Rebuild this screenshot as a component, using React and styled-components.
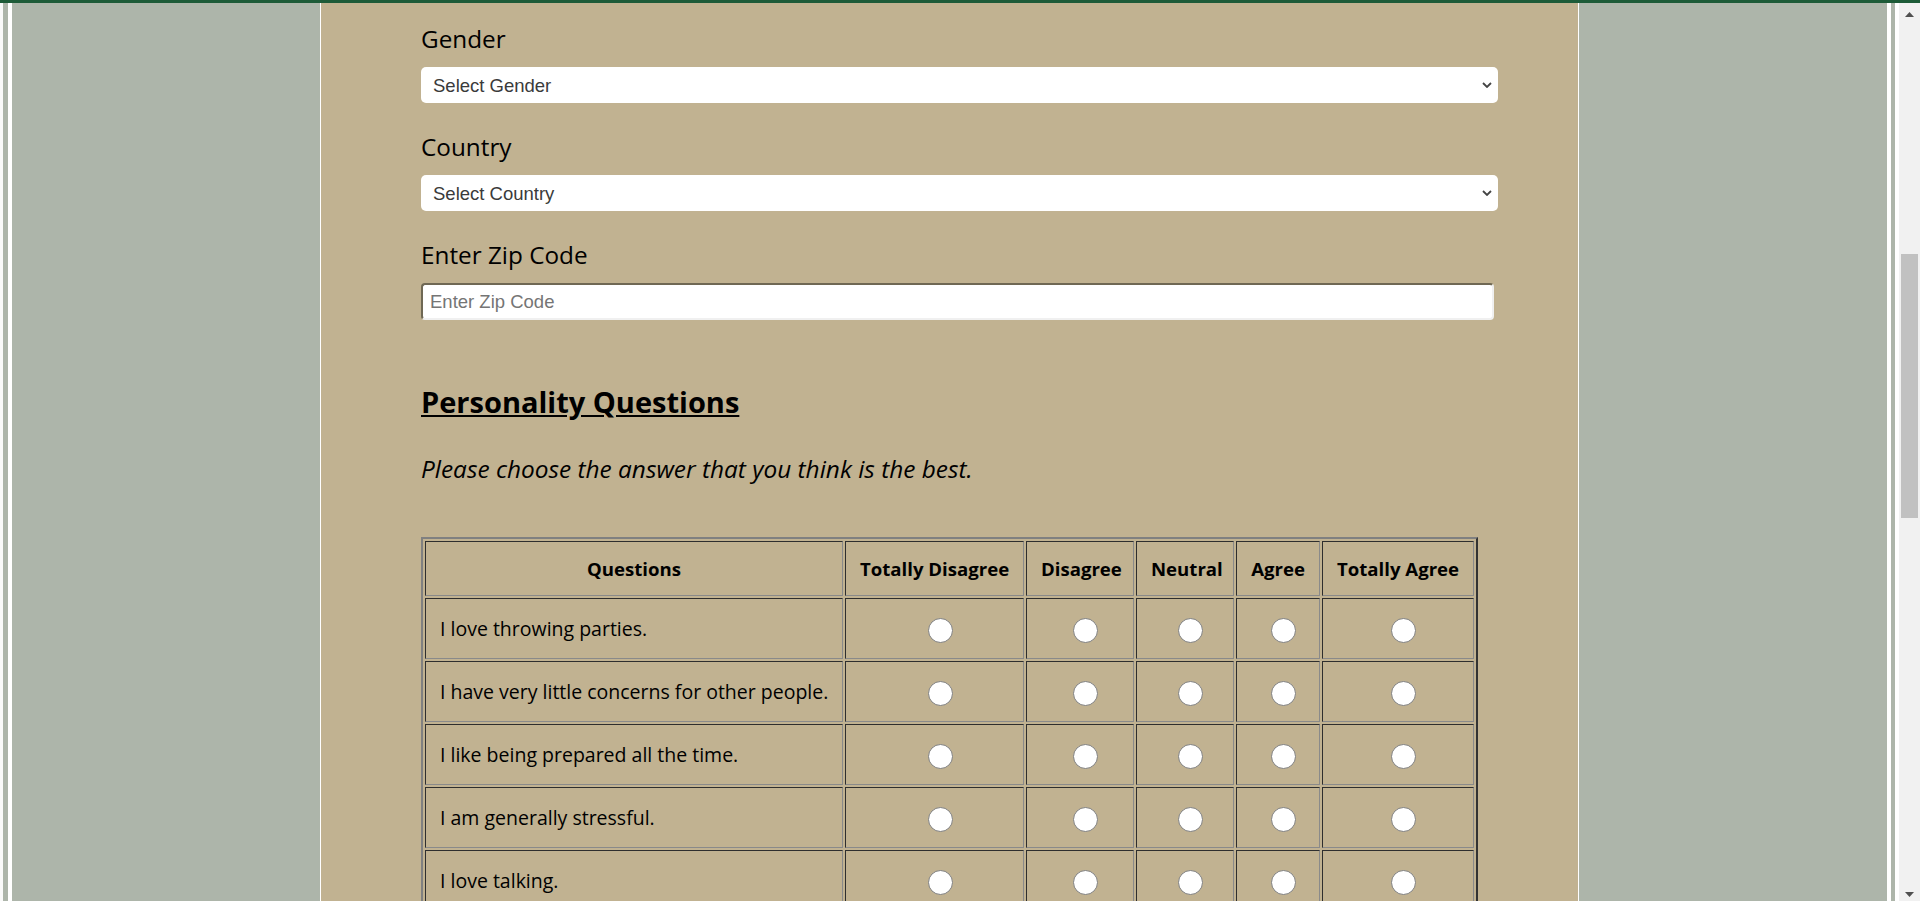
import React from 'react'
import styled, { createGlobalStyle } from 'styled-components'

const GlobalStyle = createGlobalStyle`
html, body {
    margin: 0;
    padding: 0;
    height: 100%;
    overflow: hidden;
}
body {
    font-family: 'Open Sans', 'Noto Sans', sans-serif;
    background: #adb5aa;
}
#root {
    height: 100%;
}
`

const Page = styled.div`
display: flex;
flex-direction: column;
height: 100vh;
`

const TopLine = styled.div`
height: 3px;
flex-shrink: 0;
background: #1d5b38;
`

const Body = styled.div`
flex: 1;
display: flex;
min-height: 0;
`

const Stripe = styled.div`
width: ${props => props.$w}px;
flex-shrink: 0;
background: ${props => props.$c};
`

const Backdrop = styled.div`
flex: 1;
display: flex;
justify-content: center;
overflow: hidden;
background: #adb5aa;
`

const Panel = styled.main`
width: 1259px;
flex-shrink: 0;
box-sizing: border-box;
background: #c1b291;
border-left: 1px solid #fff;
border-right: 1px solid #fff;
padding: 20px 80px 0 100px;
`

const Field = styled.div`
margin-bottom: 28px;
`

const Label = styled.label`
display: block;
font-size: 24.3px;
font-weight: 500;
line-height: 32px;
color: #000;
margin-bottom: 12px;
`

const SelectWrap = styled.div`
position: relative;
`

const Select = styled.select`
appearance: none;
display: block;
width: 100%;
height: 36px;
border: none;
border-radius: 5px;
background: #fff;
padding: 0 30px 0 12px;
font: 18.5px 'Liberation Sans', Arial, sans-serif;
color: #3a3a3a;
outline: none;
`

const Chevron = styled.svg`
position: absolute;
right: 6px;
top: 15px;
pointer-events: none;
`

const TextInput = styled.input`
display: block;
width: 1073px;
height: 37px;
box-sizing: border-box;
border-width: 2px;
border-style: solid;
border-color: #6f6854 #f0f0f0 #f0f0f0 #6f6854;
border-radius: 4px;
background: #fff;
padding: 0 7px;
font: 18.5px 'Liberation Sans', Arial, sans-serif;
color: #222;
outline: none;
::placeholder {
    color: #757575;
}
`

const Title = styled.h2`
margin: 62px 0 0;
font-size: 29px;
line-height: 40px;
font-weight: 700;
text-decoration: underline;
color: #000;
`

const Hint = styled.p`
margin: 30px 0 0;
font-size: 24.4px;
line-height: 34px;
font-style: italic;
color: #000;
`

const Table = styled.table`
margin-top: 51px;
width: 1057px;
table-layout: fixed;
border-collapse: separate;
border-spacing: 2px;
border-style: solid;
border-width: 2px;
border-color: #808080 #333 #333 #808080;
`

const HeadRow = styled.tr`
height: 55px;
`

const Row = styled.tr`
height: 61px;
`

const Cell = styled.td`
box-sizing: border-box;
border-style: solid;
border-width: 1px;
border-color: #2e2e2e #8a8a8a #8a8a8a #2e2e2e;
padding: 0 14px;
font-size: 19.5px;
color: #000;
vertical-align: middle;
text-align: ${props => props.$center ? 'center' : 'left'};
white-space: nowrap;
`

const Head = styled(Cell).attrs({ as: 'th' })`
width: ${props => props.$w}px;
font-size: 18.6px;
font-weight: 700;
text-align: center;
`

const Radio = styled.input`
appearance: none;
display: inline-block;
vertical-align: middle;
margin: 0 0 0 11px;
width: 25px;
height: 25px;
box-sizing: border-box;
border: 1px solid #808080;
border-radius: 50%;
background: #fff;
`

const ScrollBar = styled.div`
width: 21px;
flex-shrink: 0;
display: flex;
flex-direction: column;
align-items: center;
background: #f1f1f1;
`

const Arrow = styled.svg`
flex-shrink: 0;
margin-top: ${props => props.$top}px;
margin-bottom: ${props => props.$bottom || 0}px;
`

const Thumb = styled.div`
width: 17px;
height: 264px;
margin-top: 237px;
background: #c1c1c1;
`

const Spacer = styled.div`
flex: 1;
`

const columns = [
    { label: 'Totally Disagree', width: 179 },
    { label: 'Disagree', width: 108 },
    { label: 'Neutral', width: 98 },
    { label: 'Agree', width: 84 },
    { label: 'Totally Agree', width: 152 },
]

const questions = [
    'I love throwing parties.',
    'I have very little concerns for other people.',
    'I like being prepared all the time.',
    'I am generally stressful.',
    'I love talking.',
]

const Dropdown = ({ id, placeholder }) => (
    <SelectWrap>
        <Select id={id} defaultValue=''>
            <option value='' disabled>{placeholder}</option>
        </Select>
        <Chevron width='10' height='6' viewBox='0 0 10 6'>
            <path d='M1 1 L5 5 L9 1' fill='none' stroke='#444' strokeWidth='1.8' />
        </Chevron>
    </SelectWrap>
)

export default () => {
    return (
        <Page>
            <GlobalStyle />
            <TopLine />
            <Body>
                <Stripe $w={3} $c='#fafafa' />
                <Stripe $w={5} $c='#adb5aa' />
                <Stripe $w={4} $c='#fff' />
                <Backdrop>
                    <Panel>
                        <Field>
                            <Label htmlFor='gender'>Gender</Label>
                            <Dropdown id='gender' placeholder='Select Gender' />
                        </Field>
                        <Field>
                            <Label htmlFor='country'>Country</Label>
                            <Dropdown id='country' placeholder='Select Country' />
                        </Field>
                        <Field>
                            <Label htmlFor='zip'>Enter Zip Code</Label>
                            <TextInput id='zip' type='text' placeholder='Enter Zip Code' />
                        </Field>
                        <Title>Personality Questions</Title>
                        <Hint>Please choose the answer that you think is the best.</Hint>
                        <Table>
                            <thead>
                                <HeadRow>
                                    <Head $w={418}>Questions</Head>
                                    {columns.map(c => <Head key={c.label} $w={c.width}>{c.label}</Head>)}
                                </HeadRow>
                            </thead>
                            <tbody>
                                {questions.map((q, i) => (
                                    <Row key={q}>
                                        <Cell>{q}</Cell>
                                        {columns.map(c => (
                                            <Cell key={c.label} $center>
                                                <Radio type='radio' name={'q' + i} value={c.label} />
                                            </Cell>
                                        ))}
                                    </Row>
                                ))}
                            </tbody>
                        </Table>
                    </Panel>
                </Backdrop>
                <Stripe $w={4} $c='#fff' />
                <Stripe $w={4} $c='#adb5aa' />
                <Stripe $w={4} $c='#fff' />
                <ScrollBar>
                    <Arrow $top={9} width='9' height='5' viewBox='0 0 9 5'>
                        <polygon points='4.5,0 9,5 0,5' fill='#505050' />
                    </Arrow>
                    <Thumb />
                    <Spacer />
                    <Arrow $top={0} $bottom={4} width='9' height='5' viewBox='0 0 9 5'>
                        <polygon points='0,0 9,0 4.5,5' fill='#505050' />
                    </Arrow>
                </ScrollBar>
            </Body>
        </Page>
    )
}
